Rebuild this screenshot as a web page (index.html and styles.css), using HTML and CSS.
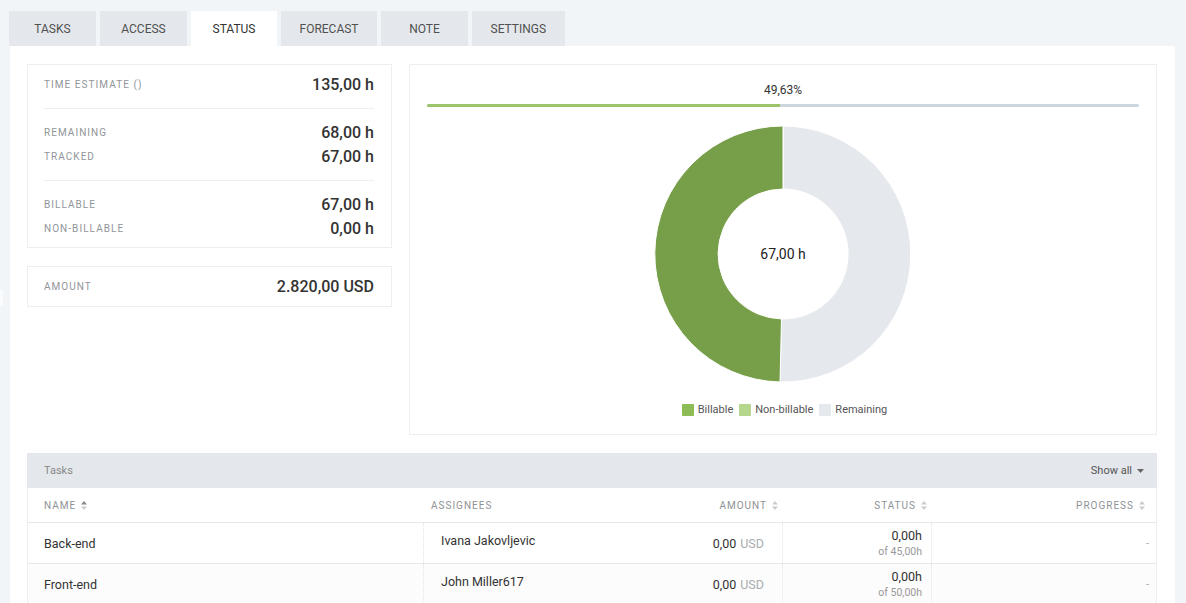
FILE: index.html
```html
<!DOCTYPE html>
<html>
<head>
<meta charset="utf-8">
<link rel="stylesheet" href="styles.css">
</head>
<body>
<div class="edge-tab"></div>
<nav class="tabs">
  <div class="tab">Tasks</div>
  <div class="tab">Access</div>
  <div class="tab active">Status</div>
  <div class="tab">Forecast</div>
  <div class="tab">Note</div>
  <div class="tab">Settings</div>
</nav>
<main class="panel">
  <section class="top">
    <div class="left-col">
      <div class="card stats">
        <div class="group g1">
          <div class="row"><span class="label">Time estimate ()</span><span class="value">135,00 h</span></div>
        </div>
        <div class="group g2">
          <div class="row"><span class="label">Remaining</span><span class="value">68,00 h</span></div>
          <div class="row"><span class="label">Tracked</span><span class="value">67,00 h</span></div>
        </div>
        <div class="group g3">
          <div class="row"><span class="label">Billable</span><span class="value">67,00 h</span></div>
          <div class="row"><span class="label">Non-billable</span><span class="value">0,00 h</span></div>
        </div>
      </div>
      <div class="card amount">
        <div class="row"><span class="label">Amount</span><span class="value">2.820,00 USD</span></div>
      </div>
    </div>
    <div class="card chart">
      <div class="pct">49,63%</div>
      <div class="bar"><div class="bar-fill" style="width:49.63%"></div></div>
      <div class="donut">
        <svg width="258" height="258" viewBox="0 0 258 258">
          <path d="M129,1 A128,128 0 1 1 126.03,256.97 L127.49,193.98 A65,65 0 1 0 129,64 Z" fill="#e5e9ee" stroke="#fff" stroke-width="1"/>
          <path d="M126.03,256.97 A128,128 0 0 1 129,1 L129,64 A65,65 0 0 0 127.49,193.98 Z" fill="#779f49" stroke="#fff" stroke-width="1"/>
        </svg>
        <div class="donut-label">67,00 h</div>
      </div>
      <div class="legend">
        <span class="lg"><i class="sw sw-bill"></i>Billable</span>
        <span class="lg"><i class="sw sw-non"></i>Non-billable</span>
        <span class="lg"><i class="sw sw-rem"></i>Remaining</span>
      </div>
    </div>
  </section>

  <section class="tasks">
    <div class="tasks-head">
      <span class="tasks-title">Tasks</span>
      <span class="show-all">Show all <svg width="7" height="4" viewBox="0 0 7 4"><path d="M0,0 L7,0 L3.5,4 Z" fill="#666"/></svg></span>
    </div>
    <div class="trow thead">
      <div class="th c-name">Name <svg class="sort" width="6" height="9" viewBox="0 0 6 9"><path d="M0,3.5 L3,0 L6,3.5 Z" fill="#888"/><path d="M0,5.5 L6,5.5 L3,9 Z" fill="#ccc"/></svg></div>
      <div class="th c-assg">Assignees</div>
      <div class="th c-amt">Amount <svg class="sort" width="6" height="9" viewBox="0 0 6 9"><path d="M0,3.5 L3,0 L6,3.5 Z" fill="#ccc"/><path d="M0,5.5 L6,5.5 L3,9 Z" fill="#ccc"/></svg></div>
      <div class="th c-status">Status <svg class="sort" width="6" height="9" viewBox="0 0 6 9"><path d="M0,3.5 L3,0 L6,3.5 Z" fill="#ccc"/><path d="M0,5.5 L6,5.5 L3,9 Z" fill="#ccc"/></svg></div>
      <div class="th c-prog">Progress <svg class="sort" width="6" height="9" viewBox="0 0 6 9"><path d="M0,3.5 L3,0 L6,3.5 Z" fill="#ccc"/><path d="M0,5.5 L6,5.5 L3,9 Z" fill="#ccc"/></svg></div>
    </div>
    <div class="trow tbody">
      <div class="td c-name">Back-end</div>
      <div class="td c-assg">Ivana Jakovljevic</div>
      <div class="td c-amt">0,00 <span class="muted">USD</span></div>
      <div class="td c-status"><span class="st-main">0,00h</span><span class="st-sub">of 45,00h</span></div>
      <div class="td c-prog">-</div>
    </div>
    <div class="trow tbody alt">
      <div class="td c-name">Front-end</div>
      <div class="td c-assg">John Miller617</div>
      <div class="td c-amt">0,00 <span class="muted">USD</span></div>
      <div class="td c-status"><span class="st-main">0,00h</span><span class="st-sub">of 50,00h</span></div>
      <div class="td c-prog">-</div>
    </div>
  </section>
</main>
</body>
</html>
```

FILE: styles.css
```css
* { box-sizing: border-box; }
html, body { margin: 0; padding: 0; }
body {
  background: #f2f5f8;
  font-family: Roboto, "Liberation Sans", Arial, sans-serif;
  color: #333;
  height: 603px;
  overflow: hidden;
  position: relative;
}
.edge-tab {
  position: absolute;
  left: 0;
  top: 290px;
  width: 3px;
  height: 16px;
  background: #fafbfc;
  border-radius: 0 2px 2px 0;
}
.tabs {
  display: flex;
  gap: 4px;
  padding: 11px 0 0 9px;
  height: 46px;
}
.tab {
  min-width: 87px;
  height: 35px;
  padding: 0 18.5px;
  display: flex;
  align-items: center;
  justify-content: center;
  background: #e4e8ec;
  font-size: 12px;
  text-transform: uppercase;
  color: #505050;
}
.tab.active { background: #fff; color: #333; min-width: 86px; }
.panel {
  margin-left: 10px;
  width: 1165px;
  background: #fff;
  padding: 18px 18px 0 17px;
  min-height: 557px;
}
.top {
  display: flex;
  gap: 17px;
  align-items: flex-start;
}
.left-col {
  width: 365px;
  display: flex;
  flex-direction: column;
  gap: 18px;
}
.card {
  border: 1px solid #eceff2;
  background: #fff;
}
.stats, .amount { padding: 0 17px 0 16px; }
.group { padding: 11px 0 12px; }
.g1 { padding-top: 7px; }
.g2, .g3 { border-top: 1px solid #eceff2; }
.g3 { padding-bottom: 7px; }
.amount { padding-top: 7px; padding-bottom: 8px; }
.row {
  display: flex;
  justify-content: space-between;
  align-items: center;
  height: 24px;
}
.label {
  font-size: 10px;
  letter-spacing: 1.05px;
  text-transform: uppercase;
  color: #919599;
}
.value {
  font-size: 16px;
  font-weight: 500;
  color: #333;
}
.chart {
  width: 748px;
  height: 371px;
  padding: 17px 17px 0;
  display: flex;
  flex-direction: column;
  align-items: center;
}
.pct {
  font-size: 12px;
  line-height: 16px;
  color: #333;
}
.bar {
  width: 712px;
  height: 3px;
  margin-top: 6px;
  background: #cdd5dd;
  border-radius: 2px;
  overflow: hidden;
}
.bar-fill { height: 100%; background: #9cc56b; }
.donut {
  position: relative;
  width: 258px;
  height: 258px;
  margin-top: 18px;
}
.donut svg { display: block; }
.donut-label {
  position: absolute;
  left: 0;
  right: 0;
  top: 0;
  bottom: 0;
  display: flex;
  align-items: center;
  justify-content: center;
  font-size: 14px;
  color: #222;
}
.legend {
  display: flex;
  gap: 6px;
  margin-top: 20px;
  margin-left: 3px;
  font-size: 11px;
  color: #555;
  line-height: 13px;
}
.lg { display: flex; align-items: center; }
.sw {
  width: 12px;
  height: 12px;
  margin-right: 4px;
  border-radius: 1px;
}
.sw-bill { background: #8dbb55; }
.sw-non { background: #b6d68e; }
.sw-rem { background: #e5e9ee; }

.tasks {
  margin-top: 18px;
  width: 1130px;
}
.tasks-head {
  height: 35px;
  background: #e4e8ec;
  display: flex;
  align-items: center;
  justify-content: space-between;
  padding: 0 13px 0 17px;
}
.tasks-title { font-size: 11px; color: #888; }
.show-all {
  font-size: 11px;
  color: #555;
  display: flex;
  align-items: center;
  gap: 5px;
}
.trow {
  display: grid;
  grid-template-columns: 395px 180px 179px 150px 226px;
  border-bottom: 1px solid #e6e9ec;
  border-left: 1px solid #eceff2;
  border-right: 1px solid #eceff2;
}
.thead { height: 35px; }
.tbody { height: 41px; }
.alt { background: #fcfcfc; }
.th {
  display: flex;
  align-items: center;
  font-size: 10px;
  letter-spacing: 1px;
  text-transform: uppercase;
  color: #8e9296;
  gap: 5px;
}
.th .sort { flex: none; }
.th.c-name { padding-left: 16px; }
.th.c-assg { padding-left: 8px; }
.th.c-amt { justify-content: flex-end; padding-right: 4px; }
.th.c-status { justify-content: flex-end; padding-right: 5px; }
.th.c-prog { justify-content: flex-end; padding-right: 13px; }
.td {
  display: flex;
  align-items: center;
  font-size: 12.5px;
  color: #333;
}
.td.c-name { padding-left: 16px; }
.td.c-assg {
  padding-left: 17px;
  align-items: flex-start;
  padding-top: 10px;
  border-left: 1px dotted #e2e5e8;
}
.td.c-amt { justify-content: flex-end; padding-right: 18px; gap: 4px; }
.muted { color: #a8acb0; }
.td.c-status {
  flex-direction: column;
  align-items: flex-end;
  justify-content: center;
  padding-right: 9px;
  border-left: 1px dotted #e2e5e8;
  border-right: 1px dotted #e2e5e8;
}
.st-main { font-size: 12.5px; line-height: 16px; }
.st-sub { font-size: 10.5px; color: #999; line-height: 15px; }
.td.c-prog {
  justify-content: flex-end;
  padding-right: 9px;
  color: #aaa;
  font-size: 11px;
}
```
